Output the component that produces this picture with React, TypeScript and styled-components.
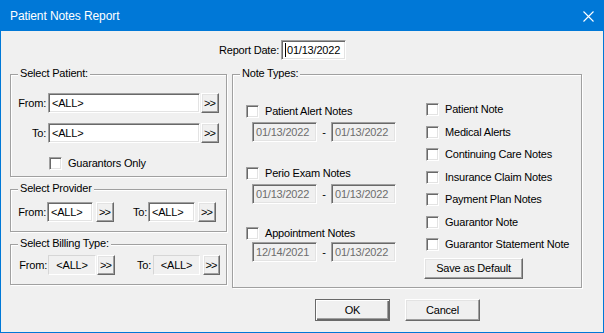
import React from "react";
import styled, { createGlobalStyle } from "styled-components";

const GlobalStyle = createGlobalStyle`
  html, body { margin: 0; padding: 0; background: #ffffff; }
  * { box-sizing: border-box; }
`;

const Window = styled.div`
  width: 604px;
  height: 333px;
  border: 1px solid #0078d7;
  background: #f0f0f0;
  display: flex;
  flex-direction: column;
  font-family: "Liberation Sans", Arial, sans-serif;
  font-size: 11px;
  line-height: 13px;
  letter-spacing: -0.2px;
  color: #000;
  overflow: hidden;
`;

const TitleBar = styled.div`
  flex: none;
  height: 30px;
  background: #0078d7;
  color: #ffffff;
  display: flex;
  align-items: center;
  justify-content: space-between;
  padding: 0 9px 0 9px;
  font-size: 12px;
  line-height: normal;
  letter-spacing: -0.1px;
`;

const CloseGlyph = styled.svg`
  display: block;
`;

const DialogBody = styled.div`
  flex: 1;
  display: flex;
  flex-direction: column;
`;

const ReportRow = styled.div`
  display: flex;
  align-items: center;
  height: 20px;
  margin-top: 9px;
`;

const ReportLabel = styled.span`
  width: 278px;
  margin-right: 2px;
  text-align: right;
`;

const Caret = styled.span`
  width: 1px;
  height: 14px;
  background: #000;
  margin-right: 1px;
  flex: none;
`;

const TextBox = styled.div<{ $w: number; $disabled?: boolean }>`
  flex: none;
  width: ${(p) => p.$w}px;
  height: 20px;
  display: flex;
  align-items: center;
  padding: 0 3px;
  border: 1px solid;
  border-color: #a0a0a0 #ffffff #ffffff #a0a0a0;
  box-shadow: inset 1px 1px 0 #696969, inset -1px -1px 0 #e3e3e3;
  background: ${(p) => (p.$disabled ? "#f0f0f0" : "#ffffff")};
  color: ${(p) => (p.$disabled ? "#6d6d6d" : "#000000")};
  white-space: nowrap;
  overflow: hidden;
`;

const StaticBox = styled.div<{ $w: number }>`
  flex: none;
  width: ${(p) => p.$w}px;
  height: 20px;
  display: flex;
  align-items: center;
  justify-content: center;
  border: 1px solid;
  border-color: #d6d6d6 #ffffff #ffffff #d6d6d6;
  background: #f0f0f0;
  white-space: nowrap;
`;

const MainRow = styled.div`
  display: flex;
  align-items: flex-start;
  gap: 5px;
  margin-top: 14px;
  padding-left: 9px;
  height: 214px;
`;

const LeftColumn = styled.div`
  display: flex;
  flex-direction: column;
  gap: 12px;
`;

const Group = styled.div<{ $w: number; $h: number }>`
  flex: none;
  width: ${(p) => p.$w}px;
  height: ${(p) => p.$h}px;
  border: 1px solid #a0a0a0;
  box-shadow: inset 1px 1px 0 #ffffff, 1px 1px 0 #ffffff;
  display: flex;
  flex-direction: column;
`;

const Legend = styled.div`
  align-self: flex-start;
  height: 13px;
  margin: -8px 0 0 7px;
  padding: 0 2px;
  background: #f0f0f0;
  white-space: nowrap;
`;

const PatientGrid = styled.div`
  display: grid;
  grid-template-columns: 36px 152px 18px;
  column-gap: 1px;
  row-gap: 10px;
  align-items: center;
  margin-top: 13px;
`;

const FieldLabel = styled.span<{ $w?: number; $pr?: number }>`
  flex: none;
  ${(p) => (p.$w ? `width: ${p.$w}px;` : "")}
  padding-right: ${(p) => p.$pr ?? 1}px;
  text-align: right;
  white-space: nowrap;
`;

const CheckRow = styled.label<{ $ml?: number; $mt?: number }>`
  display: flex;
  align-items: center;
  gap: 6px;
  height: 13px;
  margin-left: ${(p) => p.$ml ?? 0}px;
  margin-top: ${(p) => p.$mt ?? 0}px;
  white-space: nowrap;
`;

const CheckBox = styled.span`
  flex: none;
  width: 13px;
  height: 13px;
  background: #ffffff;
  border: 1px solid;
  border-color: #a0a0a0 #ffffff #ffffff #a0a0a0;
  box-shadow: inset 1px 1px 0 #696969, inset -1px -1px 0 #e3e3e3;
`;

const InlineRow = styled.div<{ $mt: number }>`
  display: flex;
  align-items: center;
  margin-top: ${(p) => p.$mt}px;
`;

const Button = styled.button<{ $w: number; $h: number; $ml?: number; $default?: boolean }>`
  flex: none;
  width: ${(p) => p.$w}px;
  height: ${(p) => p.$h}px;
  margin: 0 0 0 ${(p) => p.$ml ?? 0}px;
  padding: 0;
  font: inherit;
  letter-spacing: inherit;
  color: #000;
  background: #f0f0f0;
  border: 1px solid;
  border-color: ${(p) =>
    p.$default ? "#696969" : "#ffffff #696969 #696969 #ffffff"};
  box-shadow: ${(p) =>
    p.$default
      ? "inset 1px 1px 0 #ffffff, inset -1px -1px 0 #696969, inset -2px -2px 0 #a0a0a0"
      : "inset -1px -1px 0 #a0a0a0, inset 1px 1px 0 #e3e3e3"};
  display: flex;
  align-items: center;
  justify-content: center;
  cursor: default;
`;

const Chevrons = styled.span`
  letter-spacing: -1px;
  margin-left: -1px;
`;

const NoteGrid = styled.div`
  flex: 1;
  display: grid;
  grid-template-columns: 180px 1fr;
  padding-left: 13px;
  align-items: start;
`;

const NoteColumn = styled.div`
  display: flex;
  flex-direction: column;
`;

const NoteItem = styled.div<{ $mt: number }>`
  display: flex;
  flex-direction: column;
  margin-top: ${(p) => p.$mt}px;
`;

const DateRow = styled.div<{ $mt: number }>`
  display: flex;
  align-items: center;
  margin: ${(p) => p.$mt}px 0 0 6px;
`;

const Dash = styled.span`
  width: 14px;
  text-align: center;
  color: #000;
`;

const CheckList = styled.div`
  display: flex;
  flex-direction: column;
  gap: 9.5px;
  margin-top: 23px;
`;

const SaveWrap = styled.div`
  margin: 7px 0 0 -2px;
`;

const ButtonRow = styled.div`
  display: flex;
  gap: 15px;
  margin-top: 11px;
  padding-left: 314px;
`;

const noteTypes = [
  { label: "Patient Alert Notes", from: "01/13/2022", to: "01/13/2022", mt: 25, dmt: 4 },
  { label: "Perio Exam Notes", from: "01/13/2022", to: "01/13/2022", mt: 25, dmt: 4 },
  { label: "Appointment Notes", from: "12/14/2021", to: "01/13/2022", mt: 23, dmt: 2 },
];

const noteChecks = [
  "Patient Note",
  "Medical Alerts",
  "Continuing Care Notes",
  "Insurance Claim Notes",
  "Payment Plan Notes",
  "Guarantor Note",
  "Guarantor Statement Note",
];

const More = ({ w, ml }: { w: number; ml?: number }) => (
  <Button $w={w} $h={20} $ml={ml}>
    <Chevrons>&gt;&gt;</Chevrons>
  </Button>
);

export default function App() {
  return (
    <>
      <GlobalStyle />
      <Window>
        <TitleBar>
          <span>Patient Notes Report</span>
          <CloseGlyph width="11" height="11" viewBox="0 0 11 11">
            <path d="M0.5 0.5 L10.5 10.5 M10.5 0.5 L0.5 10.5" stroke="#ffffff" strokeWidth="1.1" fill="none" />
          </CloseGlyph>
        </TitleBar>
        <DialogBody>
          <ReportRow>
            <ReportLabel>Report Date:</ReportLabel>
            <TextBox $w={65}>
              <Caret />
              01/13/2022
            </TextBox>
          </ReportRow>

          <MainRow>
            <LeftColumn>
              <Group $w={217} $h={103}>
                <Legend>Select Patient:</Legend>
                <PatientGrid>
                  <FieldLabel>From:</FieldLabel>
                  <TextBox $w={152}>&lt;ALL&gt;</TextBox>
                  <More w={18} />
                  <FieldLabel>To:</FieldLabel>
                  <TextBox $w={152}>&lt;ALL&gt;</TextBox>
                  <More w={18} />
                </PatientGrid>
                <CheckRow $ml={38} $mt={14}>
                  <CheckBox />
                  Guarantors Only
                </CheckRow>
              </Group>

              <Group $w={217} $h={43}>
                <Legend>Select Provider</Legend>
                <InlineRow $mt={7}>
                  <FieldLabel $w={36}>From:</FieldLabel>
                  <TextBox $w={46}>&lt;ALL&gt;</TextBox>
                  <More w={18} ml={3} />
                  <FieldLabel $w={34}>To:</FieldLabel>
                  <TextBox $w={47}>&lt;ALL&gt;</TextBox>
                  <More w={18} ml={3} />
                </InlineRow>
              </Group>

              <Group $w={217} $h={41}>
                <Legend>Select Billing Type:</Legend>
                <InlineRow $mt={5}>
                  <FieldLabel $w={37}>From:</FieldLabel>
                  <StaticBox $w={48}>&lt;ALL&gt;</StaticBox>
                  <More w={18} ml={1} />
                  <FieldLabel $w={38} $pr={2}>To:</FieldLabel>
                  <StaticBox $w={47}>&lt;ALL&gt;</StaticBox>
                  <More w={17} ml={3} />
                </InlineRow>
              </Group>
            </LeftColumn>

            <Group $w={350} $h={214}>
              <Legend>Note Types:</Legend>
              <NoteGrid>
                <NoteColumn>
                  {noteTypes.map((n) => (
                    <NoteItem key={n.label} $mt={n.mt}>
                      <CheckRow>
                        <CheckBox />
                        {n.label}
                      </CheckRow>
                      <DateRow $mt={n.dmt}>
                        <TextBox $w={65} $disabled>{n.from}</TextBox>
                        <Dash>-</Dash>
                        <TextBox $w={65} $disabled>{n.to}</TextBox>
                      </DateRow>
                    </NoteItem>
                  ))}
                </NoteColumn>
                <NoteColumn>
                  <CheckList>
                    {noteChecks.map((c) => (
                      <CheckRow key={c}>
                        <CheckBox />
                        {c}
                      </CheckRow>
                    ))}
                  </CheckList>
                  <SaveWrap>
                    <Button $w={99} $h={21}>Save as Default</Button>
                  </SaveWrap>
                </NoteColumn>
              </NoteGrid>
            </Group>
          </MainRow>

          <ButtonRow>
            <Button $w={75} $h={22} $default>OK</Button>
            <Button $w={75} $h={22}>Cancel</Button>
          </ButtonRow>
        </DialogBody>
      </Window>
    </>
  );
}
